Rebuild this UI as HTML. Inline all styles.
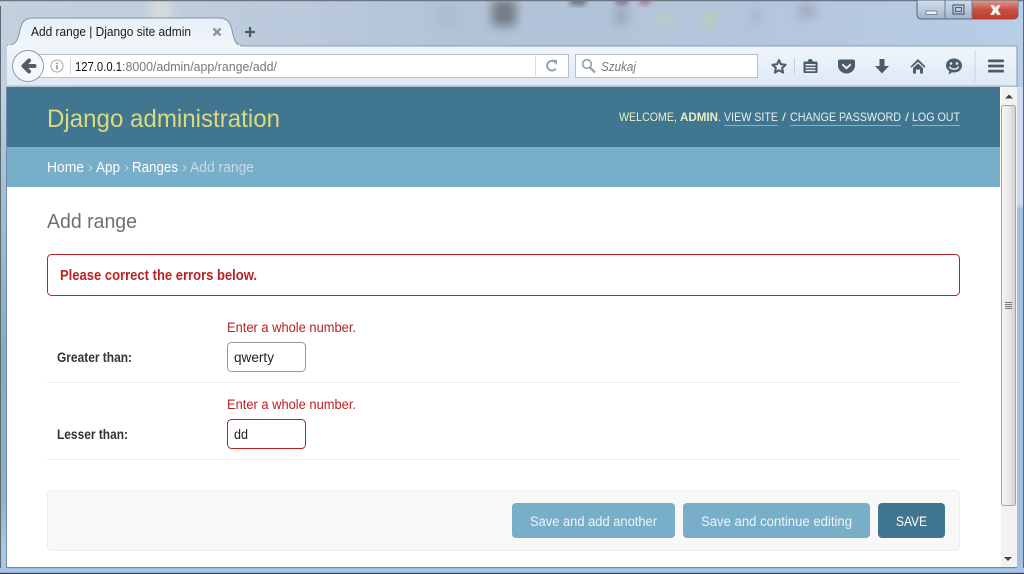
<!DOCTYPE html>
<html>
<head>
<meta charset="utf-8">
<title>Add range | Django site admin</title>
<style>
html,body{margin:0;padding:0;width:1024px;height:574px;overflow:hidden;background:#b4c8de}
svg{display:block}
text{font-family:"Liberation Sans",sans-serif}
</style>
</head>
<body>
<svg width="1024" height="574" viewBox="0 0 1024 574" xmlns="http://www.w3.org/2000/svg">
<defs>
<linearGradient id="glass" x1="0" y1="0" x2="1" y2="0">
<stop offset="0" stop-color="#c3d0de"/><stop offset=".25" stop-color="#bccbdc"/><stop offset=".45" stop-color="#b2c3d8"/><stop offset=".7" stop-color="#b3c5dc"/><stop offset="1" stop-color="#b8cde6"/>
</linearGradient>
<linearGradient id="tb" x1="0" y1="0" x2="0" y2="1"><stop offset="0" stop-color="#f1f6fb"/><stop offset="1" stop-color="#dce8f4"/></linearGradient>
<linearGradient id="tab" x1="0" y1="0" x2="0" y2="1"><stop offset="0" stop-color="#e6eff8"/><stop offset="1" stop-color="#f2f7fb"/></linearGradient>
<linearGradient id="thumb" x1="0" y1="0" x2="1" y2="0"><stop offset="0" stop-color="#f4f4f4"/><stop offset=".55" stop-color="#e8e8e8"/><stop offset="1" stop-color="#cfcfcf"/></linearGradient>
<linearGradient id="close" x1="0" y1="0" x2="0" y2="1"><stop offset="0" stop-color="#d99a90"/><stop offset=".5" stop-color="#c8503f"/><stop offset="1" stop-color="#c0392b"/></linearGradient>
<linearGradient id="ctl" x1="0" y1="0" x2="0" y2="1"><stop offset="0" stop-color="#cfdcea"/><stop offset=".5" stop-color="#b9cade"/><stop offset="1" stop-color="#9fb4cd"/></linearGradient>
<linearGradient id="leftb" x1="0" y1="0" x2="0" y2="1"><stop offset="0" stop-color="#c0d2e6"/><stop offset=".15" stop-color="#a8c4de"/><stop offset=".55" stop-color="#84aebc"/><stop offset=".85" stop-color="#8fb4c4"/><stop offset=".95" stop-color="#aac6e6"/><stop offset="1" stop-color="#aac6e6"/></linearGradient>
<linearGradient id="rightb" x1="0" y1="0" x2="0" y2="1"><stop offset="0" stop-color="#ccdcee"/><stop offset=".24" stop-color="#ccdcee"/><stop offset=".25" stop-color="#a4bfe0"/><stop offset="1" stop-color="#a4bfe0"/></linearGradient>
<filter id="bl" x="-50%" y="-50%" width="200%" height="200%"><feGaussianBlur stdDeviation="5"/></filter>
<filter id="bl2" x="-50%" y="-50%" width="200%" height="200%"><feGaussianBlur stdDeviation="3"/></filter>
</defs>

<!-- glass -->
<rect width="1024" height="574" fill="url(#glass)"/>
<g filter="url(#bl)" opacity=".75">
<rect x="150" y="0" width="22" height="22" fill="#e0e0dc"/>
<rect x="436" y="4" width="24" height="24" fill="#a8bbd0"/>
<rect x="492" y="0" width="24" height="26" fill="#5e6468"/>
<rect x="614" y="6" width="14" height="20" fill="#9aa2b0"/>
<rect x="660" y="14" width="10" height="12" fill="#c6d2a4"/>
<rect x="704" y="14" width="10" height="12" fill="#c2d496"/>
<rect x="750" y="8" width="12" height="18" fill="#a6b2ca"/>
<rect x="798" y="4" width="18" height="14" fill="#9aa2b2"/>
</g>
<g filter="url(#bl2)" opacity=".8">
<rect x="570" y="-2" width="16" height="7" fill="#55565c"/>
<rect x="616" y="-2" width="12" height="6" fill="#6a4a5a"/>
<rect x="640" y="-2" width="10" height="6" fill="#a05060"/>
</g>
<rect x="0" y="0" width="1024" height="1.200" fill="#6b7480"/>
<rect x="0" y="87" width="7" height="487" fill="url(#leftb)"/>
<rect x="1017" y="87" width="7" height="487" fill="url(#rightb)"/>
<rect x="0" y="6" width="1" height="568" fill="#5d6873"/>
<rect x="1023" y="0" width="1" height="574" fill="#5d6873"/>

<!-- window controls -->
<path d="M917 0H1018V14Q1018 19 1013 19H922Q917 19 917 14Z" fill="url(#ctl)" stroke="#5a6878" stroke-width="1"/>
<path d="M972 .5H1018V14Q1018 19 1013 19H972Z" fill="url(#close)"/>
<line x1="945" y1="0" x2="945" y2="19" fill="none" stroke="#6d7c8e"/>
<line x1="972" y1="0" x2="972" y2="19" fill="none" stroke="#6d7c8e"/>
<rect x="926" y="11" width="11" height="3.500" fill="#eef2f7" stroke="#5a6674" stroke-width=".7"/>
<rect x="953" y="5" width="11" height="9" fill="none" stroke="#56616e" stroke-width="1.200"/>
<rect x="955.500" y="7.500" width="6" height="4" fill="none" stroke="#56616e" stroke-width="1"/>
<path d="M990 5L994 5L995.500 7.500L997 5L1001 5L998 10L1001 15L997 15L995.500 12.500L994 15L990 15L993 10Z" fill="#f4f0ec" stroke="#b47a70" stroke-width=".4"/>

<!-- toolbar -->
<rect x="7" y="46" width="1010" height="40.500" fill="url(#tb)"/>
<rect x="7" y="45.500" width="1010" height="1" fill="#8a9aad"/>
<rect x="7" y="85.500" width="1010" height="1.200" fill="#a9bccf"/>
<rect x="1016.500" y="46" width="1" height="41" fill="#8799ad"/>

<!-- tab -->
<path d="M7 45.500C16 45.500 18 40 20 30C21.500 22 25 18 33 18H219C227 18 230 22 232 30C234 40 236 45.500 241 45.500V47H7Z" fill="url(#tab)"/>
<path d="M7 45.500C16 45.500 18 40 20 30C21.500 22 25 18 33 18H219C227 18 230 22 232 30C234 40 236 45.500 241 45.500" fill="none" stroke="#8494a6" stroke-width="1"/>
<rect x="8" y="45" width="232" height="2" fill="#f1f6fb"/>
<text x="31" y="36" font-size="12.800" fill="#1c1c1c" textLength="160" lengthAdjust="spacingAndGlyphs">Add range | Django site admin</text>
<path d="M213.500 28.500L220.500 35.500M220.500 28.500L213.500 35.500" stroke="#8b95a0" stroke-width="2.400"/>
<path d="M250 27V37M245 32H255" stroke="#4b5a69" stroke-width="2.200"/>

<!-- url bar -->
<rect x="28.500" y="54.500" width="540" height="23" fill="#fff" stroke="#b3c0cf"/>
<line x1="535.500" y1="56" x2="535.500" y2="76" stroke="#d6dde5"/>
<circle cx="28" cy="66" r="15.500" fill="#f4f8fc" stroke="#8f9cab" stroke-width="1"/>
<path d="M34.500 66H24.500M29 60.500L23.500 66L29 71.500" fill="none" stroke="#515c68" stroke-width="4" stroke-linejoin="round" stroke-linecap="round"/>
<circle cx="57" cy="66" r="6" fill="none" stroke="#a8a8a8" stroke-width="1"/>
<rect x="56.200" y="65" width="1.600" height="4.500" fill="#999"/>
<rect x="56.200" y="62.500" width="1.600" height="1.500" fill="#999"/>
<line x1="70.500" y1="57" x2="70.500" y2="75" stroke="#cfd6dd"/>
<text x="75" y="71" font-size="13" fill="#111" textLength="47" lengthAdjust="spacingAndGlyphs">127.0.0.1</text>
<text x="122" y="71" font-size="13" fill="#777" textLength="155" lengthAdjust="spacingAndGlyphs">:8000/admin/app/range/add/</text>
<path d="M555.500 62.500A4.800 4.800 0 1 0 555.800 68.500" fill="none" stroke="#97a2ad" stroke-width="2"/>
<path d="M552 59.500L557 60V65Z" fill="#97a2ad"/>

<!-- search -->
<rect x="575.500" y="54.500" width="182" height="23" fill="#fff" stroke="#b3c0cf"/>
<circle cx="587" cy="64" r="4.300" fill="none" stroke="#949ca4" stroke-width="1.600"/>
<path d="M590 67.500L595 72.500" stroke="#949ca4" stroke-width="2.200"/>
<text x="601" y="71" font-size="12.500" font-style="italic" fill="#777" textLength="35" lengthAdjust="spacingAndGlyphs">Szukaj</text>

<!-- toolbar icons -->
<g fill="#4d5a68" stroke="none">
<path d="M779 60L780.900 64.300L785.600 64.800L782.100 68L783.100 72.600L779 70.300L774.900 72.600L775.900 68L772.400 64.800L777.100 64.300Z" fill="none" stroke="#4d5a68" stroke-width="2" stroke-linejoin="round"/>
<rect x="794" y="58" width="1" height="16" fill="#c3cfdb"/>
<path d="M804.500 61.500H807.500L809 59H811.500L813 61.500H816.500Q817.500 61.500 817.500 62.500V72Q817.500 73 816.500 73H804.500Q803.500 73 803.500 72V62.500Q803.500 61.500 804.500 61.500ZM805.500 64V65.500H815.500V64ZM805.500 67V68.300H815.500V67ZM805.500 69.800V71.200H815.500V69.800Z" fill-rule="evenodd"/>
<path d="M840 59.500H853Q855 59.500 855 61.500V65.500C855 70 851 73.500 846.500 73.500C842 73.500 838 70 838 65.500V61.500Q838 59.500 840 59.500Z" fill="#4d5a68"/>
<path d="M842.300 64.300L846.500 68.200L850.700 64.300" fill="none" stroke="#e6eef6" stroke-width="2"/>
<path d="M879.500 59H884.500V66H889L882 73.500L875 66H879.500Z"/>
<path d="M918 59L925.500 66.500L924.500 67.800L918 61.800L911.500 67.800L910.500 66.500Z"/>
<path d="M913 68L918 63.500L923 68V73.500H920V69.500H916V73.500H913Z"/>
<path d="M954 58.500C958.500 58.500 962 61.500 962 65.500C962 69.500 958.500 72.500 954 72.500C953.300 72.500 952.700 72.400 952 72.300L948.500 74.500L949.300 71C947.300 69.700 946 67.700 946 65.500C946 61.500 949.500 58.500 954 58.500Z"/>
<circle cx="951" cy="63.500" r="1.300" fill="#e6eef6"/>
<circle cx="957" cy="63.500" r="1.300" fill="#e6eef6"/>
<path d="M949.500 66.500C950.500 70 957.500 70 958.500 66.500" fill="none" stroke="#e6eef6" stroke-width="1.400"/>
<rect x="974.500" y="50" width="1" height="32" fill="#c9d5e0"/>
<rect x="988" y="59.500" width="16" height="2.800" rx="1"/>
<rect x="988" y="64.600" width="16" height="2.800" rx="1"/>
<rect x="988" y="69.700" width="16" height="2.800" rx="1"/>
</g>

<!-- page -->
<rect x="7" y="87" width="994" height="480" fill="#fff"/>
<rect x="7" y="87" width="993" height="60" fill="#417690"/>
<rect x="7" y="147" width="993" height="40" fill="#79aec8"/>

<text x="47" y="127" font-size="25" fill="#dcd97e" textLength="233" lengthAdjust="spacingAndGlyphs">Django administration</text>

<g font-size="11.800" fill="#e9eec4">
<text x="619" y="121" textLength="58" lengthAdjust="spacingAndGlyphs">WELCOME,</text>
<text x="680" y="121" font-weight="bold" textLength="38" lengthAdjust="spacingAndGlyphs">ADMIN</text>
<text x="718" y="121">.</text>
<text x="724" y="121" fill="#e6eff2" textLength="54" lengthAdjust="spacingAndGlyphs">VIEW SITE</text>
<text x="782" y="121" textLength="4" lengthAdjust="spacingAndGlyphs">/</text>
<text x="790" y="121" fill="#e6eff2" textLength="111" lengthAdjust="spacingAndGlyphs">CHANGE PASSWORD</text>
<text x="905" y="121" textLength="4" lengthAdjust="spacingAndGlyphs">/</text>
<text x="912" y="121" fill="#e6eff2" textLength="48" lengthAdjust="spacingAndGlyphs">LOG OUT</text>
</g>
<g fill="#8fb0c0">
<rect x="724" y="125" width="54" height="1"/>
<rect x="790" y="125" width="111" height="1"/>
<rect x="912" y="125" width="48" height="1"/>
</g>

<g font-size="14.500" fill="#fff">
<text x="47" y="172" textLength="37" lengthAdjust="spacingAndGlyphs">Home</text>
<text x="88" y="172" fill="#c4dce8">›</text>
<text x="96" y="172" textLength="24" lengthAdjust="spacingAndGlyphs">App</text>
<text x="124" y="172" fill="#c4dce8">›</text>
<text x="132" y="172" textLength="46" lengthAdjust="spacingAndGlyphs">Ranges</text>
<text x="182" y="172" fill="#c4dce8">›</text>
<text x="190" y="172" fill="#c4dce8" textLength="64" lengthAdjust="spacingAndGlyphs">Add range</text>
</g>

<text x="47" y="228" font-size="20.500" fill="#6f6f6f" textLength="90" lengthAdjust="spacingAndGlyphs">Add range</text>

<rect x="47.500" y="254.500" width="912" height="41" rx="4" fill="#fff" stroke="#ba2121"/>
<text x="60" y="280" font-size="14.500" font-weight="bold" fill="#ba2121" textLength="197" lengthAdjust="spacingAndGlyphs">Please correct the errors below.</text>

<text x="227" y="332" font-size="13.500" fill="#ba2121" textLength="129" lengthAdjust="spacingAndGlyphs">Enter a whole number.</text>
<text x="57" y="362" font-size="13.500" font-weight="bold" fill="#333" textLength="75" lengthAdjust="spacingAndGlyphs">Greater than:</text>
<rect x="227.500" y="342.500" width="78" height="29" rx="4" fill="#fff" stroke="#999"/>
<text x="234" y="362" font-size="13.500" fill="#222" textLength="40" lengthAdjust="spacingAndGlyphs">qwerty</text>
<rect x="47" y="382" width="913" height="1" fill="#eee"/>

<text x="227" y="409" font-size="13.500" fill="#ba2121" textLength="129" lengthAdjust="spacingAndGlyphs">Enter a whole number.</text>
<text x="57" y="439" font-size="13.500" font-weight="bold" fill="#333" textLength="71" lengthAdjust="spacingAndGlyphs">Lesser than:</text>
<rect x="227.500" y="419.500" width="78" height="29" rx="4" fill="#fff" stroke="#ba2121"/>
<text x="234" y="439" font-size="13.500" fill="#222" textLength="14" lengthAdjust="spacingAndGlyphs">dd</text>
<rect x="47" y="459" width="913" height="1" fill="#eee"/>

<rect x="47.500" y="490.500" width="912" height="60" rx="4" fill="#f8f8f8" stroke="#eee"/>
<rect x="512" y="503" width="163" height="35" rx="4" fill="#79aec8"/>
<rect x="683" y="503" width="187" height="35" rx="4" fill="#79aec8"/>
<rect x="878" y="503" width="67" height="35" rx="4" fill="#417690"/>
<g font-size="13.500" fill="#fff">
<text x="530" y="526" fill="#eef5f9" textLength="127" lengthAdjust="spacingAndGlyphs">Save and add another</text>
<text x="701" y="526" fill="#eef5f9" textLength="151" lengthAdjust="spacingAndGlyphs">Save and continue editing</text>
<text x="896" y="526" textLength="31" lengthAdjust="spacingAndGlyphs">SAVE</text>
</g>

<!-- scrollbar -->
<rect x="1001" y="87" width="16" height="480" fill="#f2f2f2"/>
<path d="M1005 98.500L1009 94.500L1013 98.500Z" fill="#444"/>
<rect x="1001.500" y="105.500" width="14" height="400" rx="2" fill="url(#thumb)" stroke="#a4a4a4"/>
<path d="M1005 302.500H1012M1005 304.500H1012M1005 306.500H1012M1005 308.500H1012" stroke="#777" stroke-width="1"/>
<path d="M1004 557L1008 561L1012 557Z" fill="#444"/>

<!-- bottom frame -->
<rect x="0" y="568" width="1024" height="5" fill="#a9c6e8"/>
<rect x="6" y="567" width="1011" height="1.200" fill="#6f8aa5"/>
<rect x="6" y="87" width="1" height="481" fill="#6f8aa5"/>
<rect x="0" y="572.800" width="1024" height="1.200" fill="#3c4650"/>
</svg>
</body>
</html>
